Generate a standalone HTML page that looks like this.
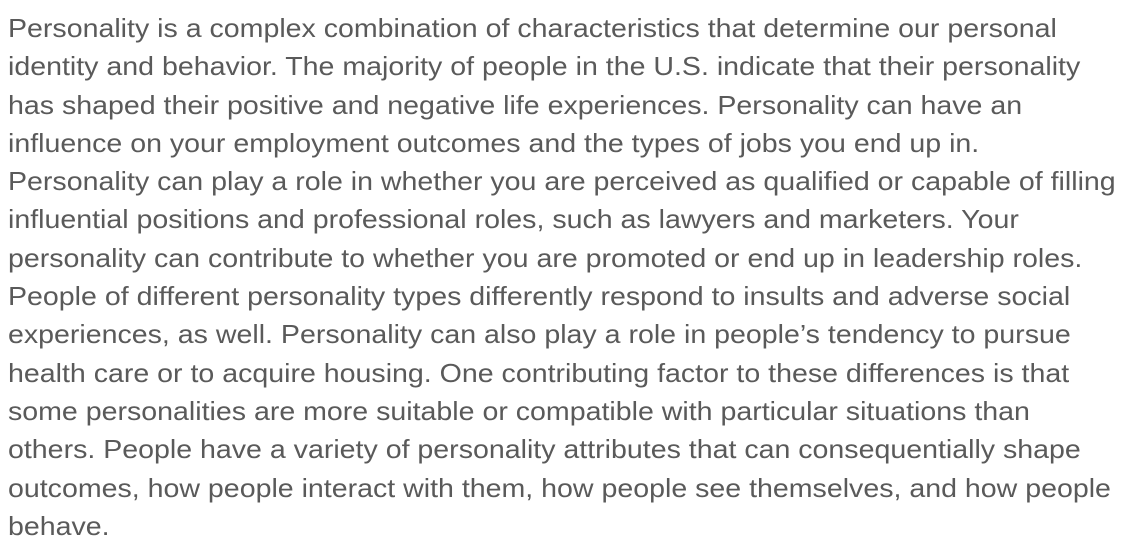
<!DOCTYPE html>
<html><head><style>
html,body{margin:0;padding:0;background:#fff;width:1132px;height:550px;overflow:hidden}
.t{position:absolute;left:8px;top:9px;font-family:"Liberation Sans",sans-serif;font-size:26px;line-height:38.3px;color:#5a5a5a;white-space:nowrap;transform:scaleX(1.098);transform-origin:0 0}
.t div{height:38.3px}
</style></head><body>
<div class="t">
<div>Personality is a complex combination of characteristics that determine our personal</div>
<div>identity and behavior. The majority of people in the U.S. indicate that their personality</div>
<div>has shaped their positive and negative life experiences. Personality can have an</div>
<div>influence on your employment outcomes and the types of jobs you end up in.</div>
<div>Personality can play a role in whether you are perceived as qualified or capable of filling</div>
<div>influential positions and professional roles, such as lawyers and marketers. Your</div>
<div>personality can contribute to whether you are promoted or end up in leadership roles.</div>
<div>People of different personality types differently respond to insults and adverse social</div>
<div>experiences, as well. Personality can also play a role in people’s tendency to pursue</div>
<div>health care or to acquire housing. One contributing factor to these differences is that</div>
<div>some personalities are more suitable or compatible with particular situations than</div>
<div>others. People have a variety of personality attributes that can consequentially shape</div>
<div>outcomes, how people interact with them, how people see themselves, and how people</div>
<div>behave.</div>
</div>
</body></html>
